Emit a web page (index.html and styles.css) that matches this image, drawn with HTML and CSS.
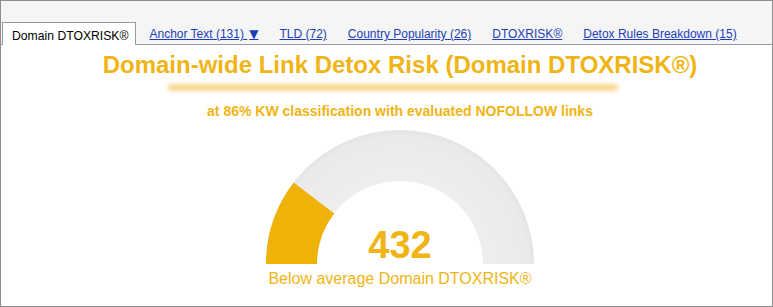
FILE: index.html
```html
<!DOCTYPE html>
<html>
<head>
<meta charset="utf-8">
<link rel="stylesheet" href="styles.css">
</head>
<body>
<div class="frame">
  <nav class="tabbar">
    <span class="tab active">Domain DTOXRISK®</span>
    <a class="tab link" href="#">Anchor Text (131) <span class="caret">▼</span></a>
    <a class="tab link" href="#">TLD (72)</a>
    <a class="tab link" href="#">Country Popularity (26)</a>
    <a class="tab link" href="#">DTOXRISK®</a>
    <a class="tab link" href="#">Detox Rules Breakdown (15)</a>
  </nav>
  <main class="content">
    <h1 class="title">Domain-wide Link Detox Risk (Domain DTOXRISK®)</h1>
    <div class="glow"></div>
    <p class="subtitle">at 86% KW classification with evaluated NOFOLLOW links</p>
    <div class="gauge">
      <svg class="gauge-svg" width="268" height="134" viewBox="0 0 268 134">
        <defs>
          <radialGradient id="shade" cx="134" cy="134" r="134" gradientUnits="userSpaceOnUse">
            <stop offset="0.62" stop-color="#eeeeee"/>
            <stop offset="0.96" stop-color="#eaeaea"/>
            <stop offset="1" stop-color="#e3e3e3"/>
          </radialGradient>
        </defs>
        <path d="M0 134 A134 134 0 0 1 268 134 L217 134 A83 83 0 0 0 51 134 Z" fill="url(#shade)"/>
        <path d="M0 134 A134 134 0 0 1 27.7 52.4 L68.2 83.5 A83 83 0 0 0 51 134 Z" fill="#efb209"/>
      </svg>
      <div class="value">432</div>
    </div>
    <p class="caption">Below average Domain DTOXRISK®</p>
  </main>
</div>
</body>
</html>
```

FILE: styles.css
```css
* { box-sizing: border-box; }
html, body { margin: 0; padding: 0; background: #fff; }
.frame {
  width: 773px;
  height: 307px;
  border: 1px solid #8e8e8e;
  font-family: "Liberation Sans", Arial, sans-serif;
  overflow: hidden;
}
.tabbar {
  height: 44px;
  background: #f5f5f5;
  border-bottom: 1px solid #9a9a9a;
  display: flex;
  align-items: flex-end;
  padding-left: 1px;
}
.tab {
  font-size: 12px;
  line-height: 14px;
  white-space: nowrap;
}
.tab.active {
  height: 23px;
  margin-bottom: -1px;
  padding: 6px 7px 0 9px;
  background: #fff;
  border: 1px solid #9a9a9a;
  border-bottom: none;
  color: #000;
  font-size: 12.2px;
}
.tab.link {
  color: #1a3fb8;
  text-decoration: underline;
  margin-left: 10px;
  margin-right: 11px;
  padding-bottom: 3px;
}
.tab.active + .tab.link { margin-left: 13px; }
.caret {
  font-family: "DejaVu Sans", sans-serif;
  font-size: 12px;
  padding-left: 2px;
}
.content {
  display: flex;
  flex-direction: column;
  align-items: center;
  padding-top: 6px;
  padding-left: 27px;
  color: #f0b414;
}
.title {
  margin: 0;
  font-size: 24px;
  line-height: 27px;
  font-weight: bold;
  white-space: nowrap;
}
.glow {
  width: 450px;
  height: 5px;
  margin-top: 7px;
  margin-right: 14px;
  border-radius: 3px;
  background: #f5c152;
  filter: blur(2.5px);
  opacity: 0.9;
}
.subtitle {
  margin: 13px 0 0;
  font-size: 14px;
  line-height: 16px;
  font-weight: bold;
  white-space: nowrap;
}
.gauge {
  display: grid;
  margin-top: 11px;
}
.gauge-svg, .value {
  grid-area: 1 / 1;
}
.gauge-svg { display: block; }
.value {
  align-self: end;
  justify-self: center;
  font-size: 38px;
  line-height: 36px;
  font-weight: bold;
  margin-bottom: 1px;
}
.caption {
  margin: 6px 0 0;
  font-size: 16px;
  line-height: 18px;
  white-space: nowrap;
}
```
